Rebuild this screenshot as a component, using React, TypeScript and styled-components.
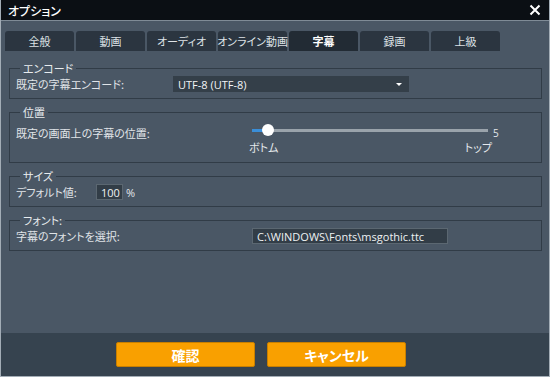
import styled, { createGlobalStyle } from "styled-components";

const GlobalStyle = createGlobalStyle`
    html, body {
        margin: 0;
        padding: 0;
        background: #4a5765;
    }
    body {
        font-family: "Noto Sans CJK JP", "Open Sans", sans-serif;
        font-size: 11px;
        font-feature-settings: "palt";
        color: #e4e8ec;
    }
    button {
        font-feature-settings: "palt";
    }
`;

const Window = styled.div`
    width: 550px;
    height: 377px;
    box-sizing: border-box;
    display: flex;
    flex-direction: column;
    background: #4a5765;
    border-left: 1px solid #a3adb6;
    border-right: 1px solid #a3adb6;
    border-bottom: 1px solid #a3adb6;
`;

const TitleBar = styled.div`
    height: 20px;
    flex: none;
    display: flex;
    align-items: center;
    justify-content: space-between;
    padding: 0 7px 0 7px;
    background: #0b0f14;
    border-bottom: 1px solid #7f8b96;
    color: #ffffff;
    font-size: 12px;
    font-weight: 500;
`;

const CloseButton = styled.svg`
    width: 12px;
    height: 12px;
    margin-right: 1px;
`;

const Body = styled.div`
    flex: 1;
    display: flex;
    flex-direction: column;
    padding-top: 10px;
`;

const TabBar = styled.div`
    display: flex;
    gap: 2px;
    padding-left: 4px;
    height: 20px;
`;

const Tab = styled.div<{ $active?: boolean }>`
    width: 69px;
    display: flex;
    align-items: center;
    justify-content: center;
    white-space: nowrap;
    border-radius: 3px 3px 0 0;
    background: ${(p) => (p.$active ? "#222b34" : "#2b3540")};
    color: ${(p) => (p.$active ? "#ffffff" : "#dde2e6")};
    font-weight: ${(p) => (p.$active ? 700 : 400)};
    font-size: 11px;
`;

const Groups = styled.div`
    display: flex;
    flex-direction: column;
    gap: 6px;
    padding: 10px 7px 0 8px;
`;

const Group = styled.fieldset`
    margin: 0;
    border: 1px solid #313c47;
    padding: 1px 6px 6px 6px;
    min-width: 0;
`;

const Legend = styled.legend`
    margin-left: 4px;
    padding: 0 3px;
    font-size: 11px;
    line-height: 14px;
    color: #e8ecef;
`;

const Row = styled.div`
    display: flex;
    align-items: center;
    height: 16px;
`;

const Label = styled.span<{ $width: number }>`
    width: ${(p) => p.$width}px;
    flex: none;
    color: #e0e4e8;
`;

const Select = styled.div`
    width: 236px;
    height: 16px;
    box-sizing: border-box;
    display: flex;
    align-items: center;
    justify-content: space-between;
    padding: 0 7px 0 5px;
    background: #343f49;
    color: #f2f4f6;
    font-family: "Open Sans", "Noto Sans CJK JP", sans-serif;
    font-size: 11px;
`;

const Caret = styled.span`
    width: 0;
    height: 0;
    border-left: 3px solid transparent;
    border-right: 3px solid transparent;
    border-top: 3px solid #ffffff;
`;

const TextBox = styled.div<{ $width: number }>`
    width: ${(p) => p.$width}px;
    height: 16px;
    box-sizing: border-box;
    display: flex;
    align-items: center;
    padding: 0 4px;
    background: #323d47;
    border: 1px solid #5b6771;
    color: #eef1f3;
    font-family: "Open Sans", "Noto Sans CJK JP", sans-serif;
    font-size: 11px;
`;

const Unit = styled.span`
    margin-left: 3px;
    font-family: "Open Sans", sans-serif;
`;

const SliderBlock = styled.div`
    display: flex;
    flex-direction: column;
    width: 250px;
    padding-top: 4px;
`;

const SliderLine = styled.div`
    display: flex;
    align-items: center;
    height: 12px;
`;

const Track = styled.div`
    position: relative;
    width: 236px;
    height: 3px;
    background: #9aa3ab;
`;

const Fill = styled.div`
    height: 100%;
    background: #3a8ed8;
`;

const Thumb = styled.div`
    position: absolute;
    top: -5px;
    width: 12px;
    height: 12px;
    margin-left: -6px;
    border-radius: 50%;
    background: #ffffff;
`;

const MaxValue = styled.span`
    margin-left: 5px;
    margin-top: 5px;
    font-family: "Open Sans", sans-serif;
    font-size: 10px;
`;

const SliderLabels = styled.div`
    display: flex;
    justify-content: space-between;
    width: 243px;
    margin-left: -3px;
    margin-top: 4px;
    line-height: 14px;
    color: #e4e8ec;
`;

const SliderRow = styled.div`
    display: flex;
    align-items: flex-start;
    height: 36px;
`;

const Footer = styled.div`
    margin-top: auto;
    height: 43px;
    display: flex;
    gap: 12px;
    padding: 9px 0 0 115px;
    box-sizing: border-box;
    background: #36434f;
`;

const Button = styled.button`
    width: 139px;
    height: 25px;
    border: 1px solid #c87f00;
    border-radius: 2px;
    background: #f9a000;
    color: #ffffff;
    font-family: "Noto Sans CJK JP", sans-serif;
    font-size: 14px;
    font-weight: 700;
    cursor: pointer;
`;

const tabs = ["全般", "動画", "オーディオ", "オンライン動画", "字幕", "録画", "上級"];

const position = 0;

const App = () => {
    return (
        <>
            <GlobalStyle />
            <Window>
                <TitleBar>
                    <span>オプション</span>
                    <CloseButton viewBox="0 0 12 12">
                        <path d="M1.5 1.5 L10.5 10.5 M10.5 1.5 L1.5 10.5" stroke="#ffffff" strokeWidth="2" />
                    </CloseButton>
                </TitleBar>
                <Body>
                    <TabBar>
                        {tabs.map((t) => (
                            <Tab key={t} $active={t === "字幕"}>
                                {t}
                            </Tab>
                        ))}
                    </TabBar>
                    <Groups>
                        <Group>
                            <Legend>エンコード</Legend>
                            <Row>
                                <Label $width={157}>既定の字幕エンコード:</Label>
                                <Select>
                                    <span>UTF-8 (UTF-8)</span>
                                    <Caret />
                                </Select>
                            </Row>
                        </Group>
                        <Group>
                            <Legend>位置</Legend>
                            <SliderRow>
                                <Label $width={236} style={{ marginTop: 5 }}>
                                    既定の画面上の字幕の位置:
                                </Label>
                                <SliderBlock>
                                    <SliderLine>
                                        <Track>
                                            <Fill style={{ width: 16 + position * 44 }} />
                                            <Thumb style={{ left: 16 + position * 44 }} />
                                        </Track>
                                        <MaxValue>5</MaxValue>
                                    </SliderLine>
                                    <SliderLabels>
                                        <span>ボトム</span>
                                        <span>トップ</span>
                                    </SliderLabels>
                                </SliderBlock>
                            </SliderRow>
                        </Group>
                        <Group>
                            <Legend>サイズ</Legend>
                            <Row>
                                <Label $width={80}>デフォルト値:</Label>
                                <TextBox $width={27}>100</TextBox>
                                <Unit>%</Unit>
                            </Row>
                        </Group>
                        <Group>
                            <Legend>フォント:</Legend>
                            <Row>
                                <Label $width={236}>字幕のフォントを選択:</Label>
                                <TextBox $width={196}>C:\WINDOWS\Fonts\msgothic.ttc</TextBox>
                            </Row>
                        </Group>
                    </Groups>
                    <Footer>
                        <Button>確認</Button>
                        <Button>キャンセル</Button>
                    </Footer>
                </Body>
            </Window>
        </>
    );
};

export default App;
